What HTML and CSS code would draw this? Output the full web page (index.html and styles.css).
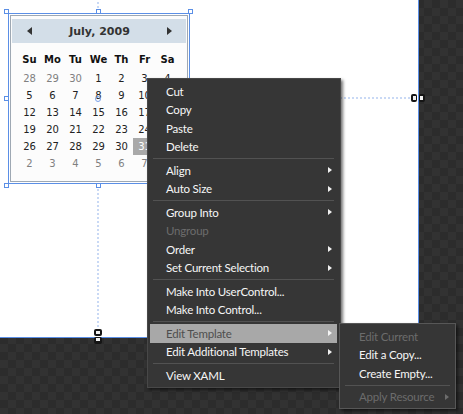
FILE: index.html
```html
<!DOCTYPE html>
<html>
<head>
<meta charset="utf-8">
<link rel="stylesheet" href="styles.css">
</head>
<body>
<div class="stage">
  <div class="artboard">
    <div class="guide guide-top"></div>
    <div class="guide guide-bottom"></div>
    <div class="guide guide-right"></div>

    <div class="calendar">
      <div class="cal-head">
        <span class="tri tri-left"></span>
        <span class="cal-title">July, 2009</span>
        <span class="tri tri-right"></span>
      </div>
      <div class="cal-dow">
        <span>Su</span><span>Mo</span><span>Tu</span><span>We</span><span>Th</span><span>Fr</span><span>Sa</span>
      </div>
      <div class="cal-days">
        <span class="other">28</span><span class="other">29</span><span class="other">30</span><span>1</span><span>2</span><span>3</span><span>4</span>
        <span>5</span><span>6</span><span>7</span><span>8</span><span>9</span><span>10</span><span>11</span>
        <span>12</span><span>13</span><span>14</span><span>15</span><span>16</span><span>17</span><span>18</span>
        <span>19</span><span>20</span><span>21</span><span>22</span><span>23</span><span>24</span><span>25</span>
        <span>26</span><span>27</span><span>28</span><span>29</span><span>30</span><span class="sel">31</span><span class="other">1</span>
        <span class="other">2</span><span class="other">3</span><span class="other">4</span><span class="other">5</span><span class="other">6</span><span class="other">7</span><span class="other">8</span>
      </div>
    </div>

    <div class="selection"></div>
    <div class="handle h-tl"></div>
    <div class="handle h-tm"></div>
    <div class="handle h-tr"></div>
    <div class="handle h-ml"></div>
    <div class="handle h-bl"></div>
    <div class="handle h-bm"></div>
    <div class="origin"></div>

    <svg class="link link-h" width="14" height="8" viewBox="0 0 14 8">
      <rect x="0" y="0" width="6" height="8" rx="2" fill="#151515"/>
      <rect x="2" y="2" width="3" height="4" fill="#f2f2f2"/>
      <rect x="8" y="0" width="6" height="8" rx="2" fill="#151515"/>
      <rect x="9" y="2" width="3" height="4" fill="#f2f2f2"/>
    </svg>
    <svg class="link link-v" width="8" height="15" viewBox="0 0 8 15">
      <rect x="0" y="0" width="8" height="7" rx="2" fill="#151515"/>
      <rect x="2" y="2" width="4" height="3" fill="#f2f2f2"/>
      <rect x="0" y="8" width="8" height="7" rx="2" fill="#151515"/>
      <rect x="2" y="9" width="4" height="3" fill="#f2f2f2"/>
    </svg>
  </div>

  <div class="menu">
    <div class="item">Cut</div>
    <div class="item">Copy</div>
    <div class="item">Paste</div>
    <div class="item">Delete</div>
    <div class="sep"></div>
    <div class="item sub">Align<span class="arrow"></span></div>
    <div class="item sub">Auto Size<span class="arrow"></span></div>
    <div class="sep"></div>
    <div class="item sub">Group Into<span class="arrow"></span></div>
    <div class="item disabled">Ungroup</div>
    <div class="item sub">Order<span class="arrow"></span></div>
    <div class="item sub">Set Current Selection<span class="arrow"></span></div>
    <div class="sep"></div>
    <div class="item">Make Into UserControl...</div>
    <div class="item">Make Into Control...</div>
    <div class="sep"></div>
    <div class="item sub active">Edit Template<span class="arrow"></span></div>
    <div class="item sub">Edit Additional Templates<span class="arrow"></span></div>
    <div class="sep"></div>
    <div class="item">View XAML</div>
  </div>

  <div class="menu submenu">
    <div class="item disabled">Edit Current</div>
    <div class="item">Edit a Copy...</div>
    <div class="item">Create Empty...</div>
    <div class="sep"></div>
    <div class="item sub disabled">Apply Resource<span class="arrow"></span></div>
  </div>
</div>
</body>
</html>
```

FILE: styles.css
```css
html, body {
  margin: 0;
  padding: 0;
}

body {
  width: 463px;
  height: 414px;
  overflow: hidden;
}

.stage {
  position: relative;
  width: 463px;
  height: 414px;
  background-color: #2f2f2f;
  background-image: conic-gradient(#323232 25%, #2c2c2c 0 50%, #323232 0 75%, #2c2c2c 0);
  background-size: 16px 16px;
}

.artboard {
  position: relative;
  width: 418px;
  height: 337px;
  background: #ffffff;
  border-right: 1px solid #5b8fe6;
  border-bottom: 1px solid #5b8fe6;
}

/* dotted layout guides */
.guide {
  position: absolute;
}
.guide-top {
  left: 97px;
  top: 2px;
  width: 2px;
  height: 6px;
  background: repeating-linear-gradient(to bottom, #c9d9f5 0 2px, transparent 2px 4px);
}
.guide-bottom {
  left: 97px;
  top: 189px;
  width: 2px;
  height: 139px;
  background: repeating-linear-gradient(to bottom, #c9d9f5 0 2px, transparent 2px 4px);
}
.guide-right {
  left: 192px;
  top: 97px;
  width: 219px;
  height: 2px;
  background: repeating-linear-gradient(to right, #c9d9f5 0 2px, transparent 2px 4px);
}

/* calendar */
.calendar {
  position: absolute;
  left: 10px;
  top: 15px;
  width: 178px;
  height: 167px;
  box-sizing: border-box;
  border: 1px solid #9ea8b3;
  background: #fcfcfc;
  padding: 3px 1px 0 1px;
  font-family: "DejaVu Sans", Verdana, sans-serif;
  color: #222;
}

.cal-head {
  height: 24px;
  background: #d3dee8;
  display: flex;
  align-items: center;
  justify-content: space-between;
  padding: 0 14px 0 15px;
}

.cal-title {
  font-weight: bold;
  font-size: 11px;
  color: #333;
  padding-top: 1px;
}

.tri {
  width: 0;
  height: 0;
  border-top: 4.5px solid transparent;
  border-bottom: 4.5px solid transparent;
}
.tri-left {
  border-right: 5px solid #333;
}
.tri-right {
  border-left: 5px solid #333;
}

.cal-dow,
.cal-days {
  display: grid;
  grid-template-columns: repeat(7, 23px);
  grid-auto-rows: 17px;
  margin-left: 6px;
  font-size: 10px;
}
.cal-dow {
  margin-top: 8px;
  font-weight: bold;
  color: #111;
}
.cal-days {
  margin-top: 2px;
}
.cal-dow span,
.cal-days span {
  display: flex;
  align-items: center;
  justify-content: center;
}
.cal-days .other {
  color: #808080;
}
.cal-days .sel {
  background: #a9a9a9;
  color: #ffffff;
}

/* selection adorner */
.selection {
  position: absolute;
  left: 8px;
  top: 13px;
  width: 182px;
  height: 171px;
  box-sizing: border-box;
  border: 1px solid #5b8fe6;
}
.handle {
  position: absolute;
  width: 5px;
  height: 5px;
  box-sizing: border-box;
  border: 1px solid #5b8fe6;
  background: #ffffff;
}
.h-tl { left: 4px; top: 9px; }
.h-tm { left: 96px; top: 9px; }
.h-tr { left: 188px; top: 9px; }
.h-ml { left: 4px; top: 96px; }
.h-bl { left: 4px; top: 183px; }
.h-bm { left: 96px; top: 183px; }

.origin {
  position: absolute;
  left: 95px;
  top: 96px;
  width: 6px;
  height: 6px;
  box-sizing: border-box;
  border: 1px solid #7aa2ea;
  border-radius: 50%;
}

.link {
  position: absolute;
  display: block;
}
.link-h { left: 411px; top: 94px; }
.link-v { left: 94px; top: 329px; }

/* context menu */
.menu {
  position: absolute;
  left: 147px;
  top: 78px;
  width: 194px;
  height: 310px;
  box-sizing: border-box;
  background: #363636;
  border: 1px solid #484848;
  padding: 3px 3px 2px 2px;
  box-shadow: 2px 2px 3px rgba(0, 0, 0, 0.55);
  font-family: Lato, "Noto Sans", sans-serif;
  font-size: 11.5px;
  letter-spacing: -0.2px;
  color: #f6f6f6;
}

.item {
  height: 18.5px;
  display: flex;
  align-items: center;
  justify-content: space-between;
  padding: 0 5px 0 16px;
  white-space: nowrap;
}

.item.disabled {
  color: #6c6c6c;
}

.item.active {
  background: #a8a8a8;
  color: #4e4e4e;
}

.arrow {
  width: 0;
  height: 0;
  border-top: 3.5px solid transparent;
  border-bottom: 3.5px solid transparent;
  border-left: 4px solid #f0f0f0;
}
.active .arrow {
  border-left-color: #f4f4f4;
}
.disabled .arrow {
  border-left-color: #6c6c6c;
}

.sep {
  height: 5px;
  margin: 0 3px;
  display: flex;
  align-items: center;
}
.sep::before {
  content: "";
  flex: 1;
  height: 1px;
  background: #525252;
}

.submenu {
  left: 339px;
  top: 323px;
  width: 117px;
  height: 86px;
  border-color: #575757;
  padding: 3px 2px 1px 2px;
}
.submenu .item {
  padding: 0 4px 0 17px;
}
```
